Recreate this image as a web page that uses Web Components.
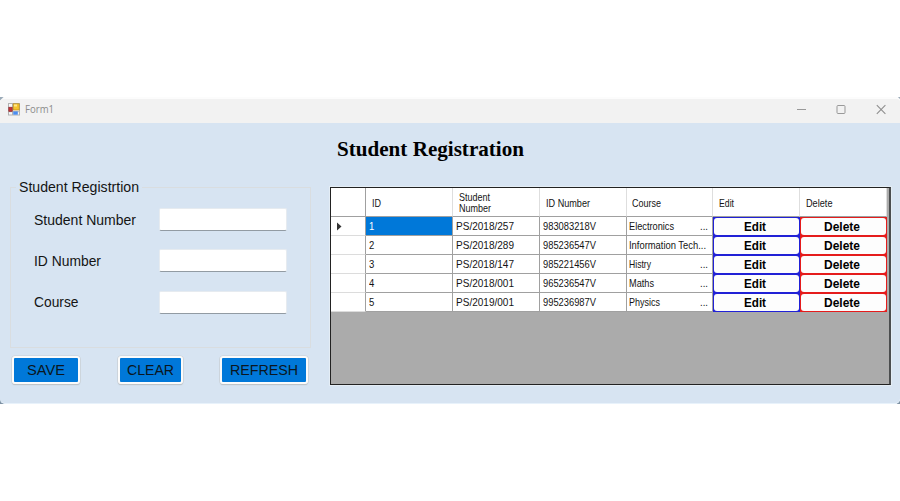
<!DOCTYPE html>
<html lang="en">
<head>
<meta charset="utf-8">
<title>Form1</title>
<style>
html,body{margin:0;width:900px;height:501px;overflow:hidden;background:#fff;font-family:"Liberation Sans",Arial,sans-serif;color:#141414}
body{box-sizing:border-box;padding-top:97px}
</style>
</head>
<body>
<app-window></app-window>
<script>
const make = (tag, html, ready) => customElements.define(tag, class extends HTMLElement {
  connectedCallback() {
    if (this.shadowRoot) return;
    this.attachShadow({mode: 'open'}).innerHTML = typeof html === 'function' ? html(this) : html;
    if (ready) ready(this);
  }
});

/* Single-line text condensed or expanded to a set width. */
make('fit-text', el => `<style>:host{display:block;flex:none;white-space:nowrap;width:${el.getAttribute('w')}px}
span{display:inline-block;transform-origin:0 50%}</style><span>${el.getAttribute('text')}</span>`, el => {
  const s = el.shadowRoot.querySelector('span');
  s.style.transform = `scaleX(${el.getAttribute('w') / s.getBoundingClientRect().width})`;
});

make('title-bar', `<style>
:host{display:flex;align-items:center;height:24px;background:#f2f2f2;padding:0 13px 0 8px;color:#8c8c8c;font:10.5px/24px "Open Sans","Noto Sans",sans-serif;border-radius:4px 3px 0 0}
svg{display:block;flex:none}fit-text{margin-left:5px;flex:1}.c{display:flex;gap:29px}.app{margin-top:-4px}
.c{margin-top:-4px}.t{margin-top:-4px}</style>
<svg class="app" width="12" height="13" viewBox="0 0 12 13"><rect x=".5" y=".5" width="11" height="11.5" fill="#f8f8f8" stroke="#b2b2b2"/><path d="M4.5 1V12M0 8.7H12" stroke="#b2b2b2"/><rect x=".8" y="4.2" width="3.4" height="4.2" fill="#c43336" stroke="#8b2026" stroke-width=".6"/><rect x="5.2" y=".8" width="6" height="6.2" fill="#f5c42e" stroke="#b98b18" stroke-width=".7"/><rect x="6" y="1.5" width="3" height="2" fill="#ffe68a"/><rect x="5.2" y="8.4" width="4.6" height="3.3" fill="#4b8df0"/></svg>
<fit-text class="t" w="29" text="Form1"></fit-text>
<div class="c">
<svg width="11" height="11" viewBox="0 0 11 11"><path d="M1 5.5H10" stroke="#999"/></svg>
<svg width="11" height="11" viewBox="0 0 11 11"><rect x="1" y="1.5" width="8" height="8" rx="1" fill="none" stroke="#999"/></svg>
<svg width="11" height="11" viewBox="0 0 11 11"><path d="M.8 1.2L9.4 9.8M9.4 1.2L.8 9.8" stroke="#8f8f8f" stroke-width="1.1"/></svg>
</div>`);

make('form-field', el => `<style>
:host{display:flex;align-items:center;justify-content:space-between;height:23px}
fit-text{font-size:15px;line-height:22px}
input{display:block;box-sizing:border-box;width:128px;height:23px;margin:0;padding:0 4px;border:1px solid #e6ebf0;border-bottom:1.5px solid #929ba3;border-radius:2px;background:#fff;outline:0}
</style><fit-text w="${el.getAttribute('w')}" text="${el.getAttribute('label')}"></fit-text><input>`);

make('group-box', `<style>
:host{display:block}
fieldset{box-sizing:border-box;width:301px;height:169px;margin:0;padding:0 23px 0 23px;border:1px solid #d9dde0;min-width:0}
legend{margin-left:-18px;padding:0 3px;font-size:15px;line-height:16px}
div{display:flex;flex-direction:column;gap:18.3px;padding-top:13px}
</style><fieldset><legend><fit-text w="120" text="Student Registrtion"></fit-text></legend><div><slot></slot></div></fieldset>`);

make('action-button', el => `<style>
:host{display:block}
button{display:flex;align-items:center;justify-content:center;box-sizing:border-box;width:${el.getAttribute('bw')}px;height:28px;padding:0;border:2px solid #fbfbfb;border-radius:3px;background:#0078d9;color:#0b1620;font:15px/24px "Liberation Sans",Arial,sans-serif;box-shadow:0 0 0 .6px #c9ced2,0 1px 1px #aeb5bb}
</style><button><fit-text w="${el.getAttribute('w')}" text="${el.getAttribute('label')}"></fit-text></button>`);

make('cell-button', el => `<style>
:host{display:block;box-sizing:border-box;width:100%;height:100%;padding:1px;background:var(--c)}
button{display:flex;align-items:center;justify-content:center;box-sizing:border-box;width:100%;height:100%;border:0;border-radius:3px;background:#fdfdfd;padding:1px 3px 0 0;color:#000;font:bold 12.5px/16px "Liberation Sans",Arial,sans-serif}
</style><button><fit-text w="${el.getAttribute('w')}" text="${el.getAttribute('label')}"></fit-text></button>`);

const students = [
  ['1', 'PS/2018/257', '983083218V', 'Electronics', 45],
  ['2', 'PS/2018/289', '985236547V', 'Information Tech...', 77],
  ['3', 'PS/2018/147', '985221456V', 'Histry', 22],
  ['4', 'PS/2018/001', '965236547V', 'Maths', 25],
  ['5', 'PS/2019/001', '995236987V', 'Physics', 31]
];
const ft = (w, t) => `<fit-text w="${w}" text="${t}"></fit-text>`;

make('data-grid', () => `<style>
:host{display:block;box-sizing:border-box;width:561px;height:198px;border:1px solid #222;border-right:2px solid #4b4d4e;background:#ababab;box-shadow:0 0 0 1px #e4edf5;font-size:11px;line-height:11px}
.grid{display:grid;grid-template-columns:35px 87px 87px 87px 86px 87px 87px;width:556px;grid-template-rows:29px repeat(5,19px)}
.grid>div{box-sizing:border-box;display:flex;align-items:center;background:#fff;border-right:1px solid #a0a0a0;border-bottom:1px solid #a0a0a0;padding-left:3px;min-width:0;overflow:hidden}
.grid>.h{border-right-color:#dedede;padding-left:6px;padding-top:2px;flex-direction:column;align-items:flex-start;justify-content:center}
.grid>.h.first{border-right-color:#a0a0a0}
.grid>.r{border-bottom-color:#dcdcdc;padding-left:6px}
.grid>.sel{background:#0078d9;color:#fff}
.grid>.course{padding-left:2px}
.grid>.h.course{padding-left:5px}
.grid>.b{padding:0;border:0}
.e{--c:#2121d6}.d{--c:#e51c1c}
.more{margin-left:auto;margin-right:4px}
svg{display:block;margin-top:1px}
</style><div class="grid">
<div class="h first"></div><div class="h">${ft(9,'ID')}</div><div class="h">${ft(31,'Student')}${ft(32,'Number')}</div><div class="h">${ft(44,'ID Number')}</div><div class="h course">${ft(29,'Course')}</div><div class="h">${ft(15,'Edit')}</div><div class="h">${ft(26.5,'Delete')}</div>
${students.map((s, i) => `<div class="r">${i ? '' : '<svg width="5" height="9" viewBox="0 0 5 9"><path d="M0 .5V8.5L4.5 4.5Z" fill="#333"/></svg>'}</div>
<div class="${i ? '' : 'sel'}">${ft(5.3,s[0])}</div><div>${ft(58,s[1])}</div><div>${ft(53,s[2])}</div>
<div class="course">${ft(s[4],s[3])}${i === 1 ? '' : `<fit-text class="more" w="8" text="..."></fit-text>`}</div>
<div class="b e"><cell-button label="Edit" w="22"></cell-button></div><div class="b d"><cell-button label="Delete" w="36"></cell-button></div>`).join('')}
</div>`);

make('app-window', `<style>
:host{display:block;box-sizing:border-box;height:307px;padding-top:2px;background:linear-gradient(135deg,#9aaab8 0 2px,transparent 3px),linear-gradient(225deg,#9aaab8 0 1px,transparent 2px),linear-gradient(45deg,#7d91a3 0 3px,transparent 4px),linear-gradient(315deg,#7d91a3 0 2px,transparent 3px),#fcfcfc}
main{box-sizing:border-box;height:281px;background:#d7e4f2;border-bottom:1px solid #e8f2fb;border-radius:0 0 5px 5px;padding-top:12px}
h1{display:flex;margin:0 0 0 337px;height:28px;font:bold 21px/28px "Liberation Serif","Times New Roman",serif;color:#000}
.cols{display:flex;justify-content:space-between;padding:24px 9px 0 10px}
group-box{margin-top:-8px}
.actions{display:flex;justify-content:space-between;width:296px;margin:8px 0 0 2px}
</style><title-bar></title-bar><main><h1><fit-text w="187" text="Student Registration"></fit-text></h1>
<div class="cols"><div class="left"><group-box>
<form-field label="Student Number" w="102"></form-field><form-field label="ID Number" w="67"></form-field><form-field label="Course" w="44.5"></form-field></group-box>
<div class="actions"><action-button bw="68" w="38" label="SAVE"></action-button><action-button bw="65" w="47" label="CLEAR"></action-button><action-button bw="88" w="68" label="REFRESH"></action-button></div></div>
<data-grid></data-grid></div></main>`);
</script>
</body>
</html>
